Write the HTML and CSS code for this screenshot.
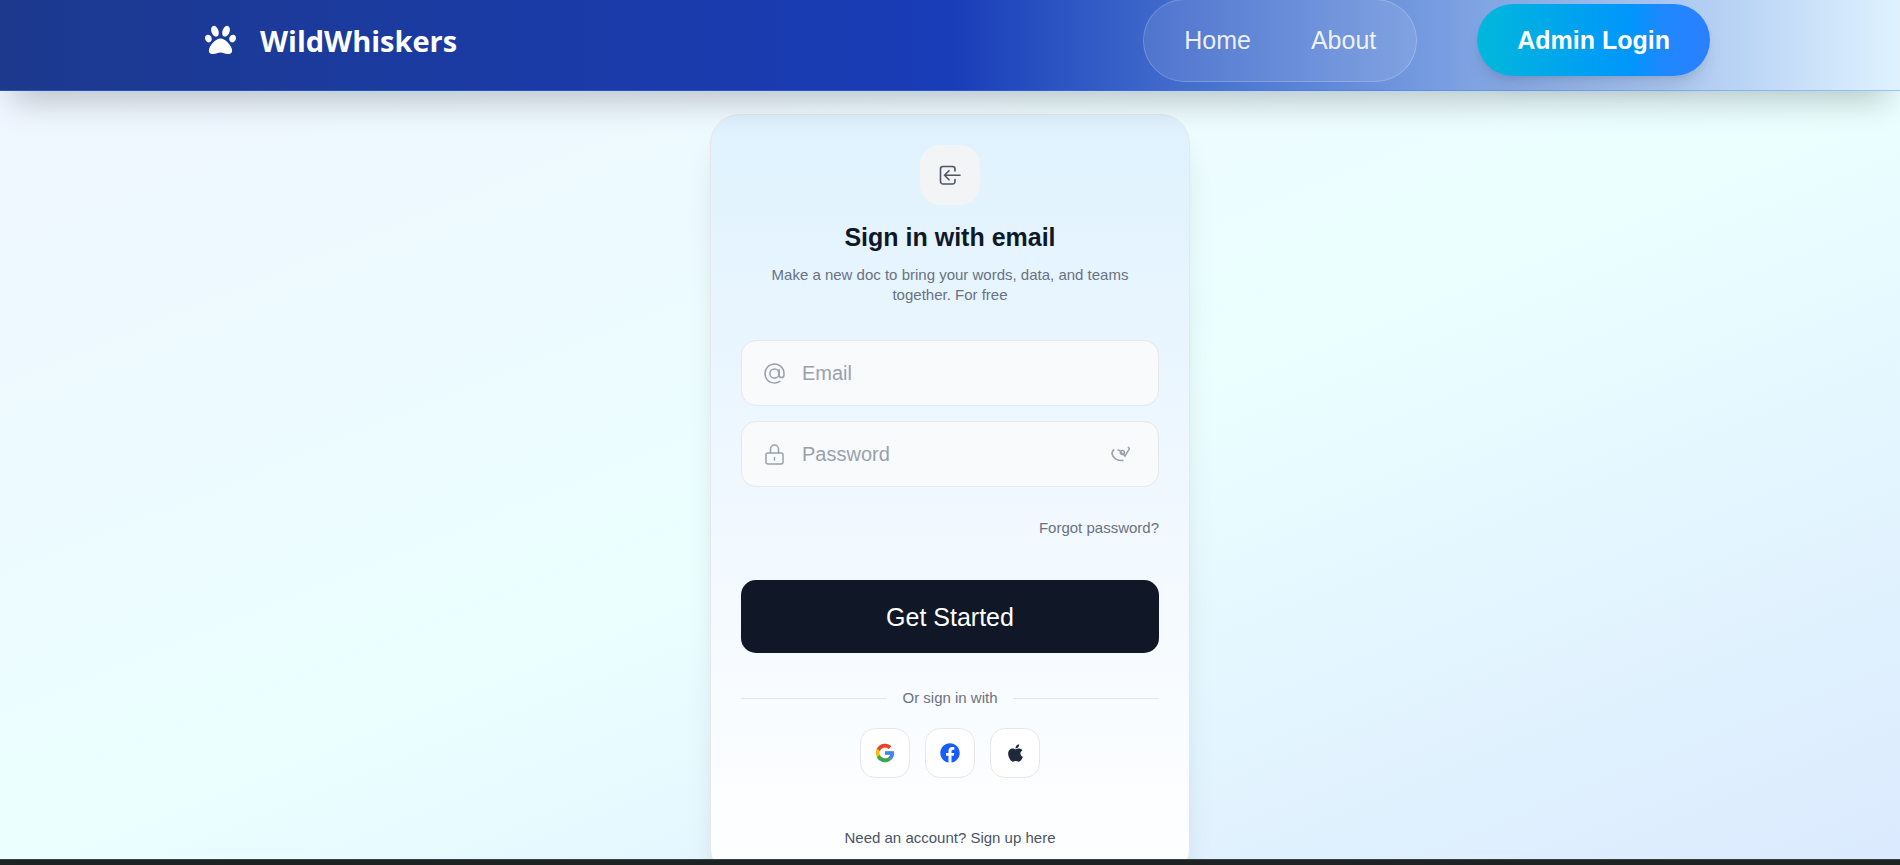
FILE: index.html
```html
<!DOCTYPE html>
<html lang="en">
<head>
<meta charset="utf-8">
<meta name="viewport" content="width=device-width, initial-scale=1">
<title>WildWhiskers</title>
<link rel="stylesheet" href="styles.css">
</head>
<body>
<header class="site-header">
  <div class="header-inner">
    <div class="brand">
      <span class="brand-mark">
        <svg width="31" height="31" viewBox="0 0 512 512" fill="currentColor" aria-hidden="true"><path d="M256 224c-79.41 0-192 122.76-192 200.25 0 34.9 26.81 55.75 71.74 55.75 48.84 0 81.09-25.08 120.26-25.08 39.51 0 71.85 25.08 120.26 25.08 44.93 0 71.74-20.85 71.74-55.75C448 346.76 335.41 224 256 224zm-147.28-12.61c-10.4-34.65-42.44-57.09-71.56-50.13-29.12 6.96-44.29 40.69-33.89 75.34 10.4 34.65 42.44 57.09 71.56 50.13 29.12-6.96 44.29-40.69 33.89-75.34zm84.72-20.78c30.94-8.14 42.94-53.9 26.8-102.21-16.14-48.31-54.31-80.9-85.25-72.76-30.94 8.14-42.94 53.9-26.8 102.21 16.14 48.31 54.32 80.9 85.25 72.76zm281.39-29.34c-29.12-6.96-61.15 15.48-71.56 50.13-10.4 34.65 4.77 68.38 33.89 75.34 29.12 6.96 61.15-15.48 71.56-50.13 10.4-34.65-4.77-68.38-33.89-75.34zm-156.27 29.34c30.94 8.14 69.11-24.45 85.25-72.76 16.14-48.31 4.14-94.07-26.8-102.21-30.94-8.14-69.11 24.45-85.25 72.76-16.14 48.31-4.14 94.07 26.8 102.21z"/></svg>
      </span>
      <span class="brand-name">WildWhiskers</span>
    </div>
    <div class="header-actions">
      <nav class="nav-pill">
        <a class="nav-link" href="#home">Home</a>
        <a class="nav-link" href="#about">About</a>
      </nav>
      <button class="admin-button" type="button">Admin Login</button>
    </div>
  </div>
</header>

<main class="page">
  <form class="card">
    <span class="card-badge">
      <svg width="25" height="25" viewBox="0 0 25 25" fill="none" stroke="currentColor" stroke-width="1.6" stroke-linecap="round" stroke-linejoin="round" aria-hidden="true"><path d="M17 8V6a2.500 2.500 0 0 0-2.500-2.500H5A2.500 2.500 0 0 0 2.500 6v12.500A2.500 2.500 0 0 0 5 21h9.500a2.500 2.500 0 0 0 2.500-2.500v-2M22 12.200H7M11 7.700l-4.500 4.500L11 16.700"/></svg>
    </span>
    <h1 class="card-title">Sign in with email</h1>
    <p class="card-text">Make a new doc to bring your words, data, and teams together. For free</p>

    <div class="fields">
      <div class="field">
        <svg class="field-icon" width="25" height="25" viewBox="0 0 25 25" fill="none" stroke="currentColor" stroke-width="1.5" stroke-linecap="round" aria-hidden="true"><circle cx="12.500" cy="12.500" r="4.600"/><path d="M17.100 8.500v5.200a2.450 2.900 0 0 0 4.900 0v-1.200a9.500 9.500 0 1 0-4.200 7.900"/></svg>
        <input class="field-input" type="email" placeholder="Email" aria-label="Email">
      </div>
      <div class="field">
        <svg class="field-icon" width="25" height="25" viewBox="0 0 25 25" fill="none" stroke="currentColor" stroke-width="1.500" stroke-linecap="round" aria-hidden="true"><rect x="4" y="11" width="17" height="11" rx="2"/><path d="M8.500 11V7a4 4 0 0 1 8 0v4M12.500 15.500v2.500"/></svg>
        <input class="field-input" type="password" placeholder="Password" aria-label="Password">
        <button class="reveal" type="button" aria-label="Show password">
          <svg width="20" height="20" viewBox="0 0 20 20" fill="none" stroke="currentColor" stroke-width="1.600" aria-hidden="true"><path d="M4.300 5.500C.5 8 1.800 12 5.500 14.800c2.500 1.700 5 1.900 8 1.700M7.500 6l3 .8M10 7.500l5 4.500 3.300-5.500c1.200-1 1.700-1.300-.3-3.500"/><circle cx="12.400" cy="8.500" r="2"/></svg>
        </button>
      </div>
    </div>

    <a class="forgot" href="#forgot">Forgot password?</a>
    <button class="submit" type="submit">Get Started</button>

    <div class="divider">Or sign in with</div>

    <div class="socials">
      <button class="social" type="button" aria-label="Google">
        <svg width="22" height="22" viewBox="0 0 48 48" aria-hidden="true"><path fill="#fbbc05" d="M43.611 20.083H42V20H24v8h11.303c-1.649 4.657-6.080 8-11.303 8-6.627 0-12-5.373-12-12s5.373-12 12-12c3.059 0 5.842 1.154 7.961 3.039l5.657-5.657C34.046 6.053 29.268 4 24 4 12.955 4 4 12.955 4 24s8.955 20 20 20 20-8.955 20-20c0-1.341-.138-2.650-.389-3.917z"/><path fill="#ea4335" d="m6.306 14.691 6.571 4.819C14.655 15.108 18.961 12 24 12c3.059 0 5.842 1.154 7.961 3.039l5.657-5.657C34.046 6.053 29.268 4 24 4 16.318 4 9.656 8.337 6.306 14.691z"/><path fill="#34a853" d="M24 44c5.166 0 9.860-1.977 13.409-5.192l-6.190-5.238A11.910 11.910 0 0 1 24 36c-5.202 0-9.619-3.317-11.283-7.946l-6.522 5.025C9.505 39.556 16.227 44 24 44z"/><path fill="#4285f4" d="M43.611 20.083H42V20H24v8h11.303a12.040 12.040 0 0 1-4.087 5.571l6.193 5.238C36.971 39.205 44 34 44 24c0-1.341-.138-2.650-.389-3.917z"/></svg>
      </button>
      <button class="social social-facebook" type="button" aria-label="Facebook">
        <svg width="20" height="20" viewBox="0 0 512 512" fill="currentColor" aria-hidden="true"><path d="M504 256C504 119 393 8 256 8S8 119 8 256c0 123.780 90.690 226.380 209.250 245V327.690h-63V256h63v-54.640c0-62.150 37-96.480 93.670-96.480 27.140 0 55.520 4.840 55.520 4.840v61h-31.280c-30.800 0-40.410 19.120-40.410 38.730V256h68.780l-11 71.690h-57.780V501C413.310 482.380 504 379.780 504 256z"/></svg>
      </button>
      <button class="social social-apple" type="button" aria-label="Apple">
        <svg width="15" height="20" viewBox="0 0 384 512" fill="currentColor" aria-hidden="true"><path d="M318.700 268.700c-.2-36.700 16.400-64.400 50-84.800-18.800-26.900-47.200-41.700-84.700-44.600-35.500-2.800-74.300 20.700-88.500 20.700-15 0-49.400-19.700-76.400-19.700C63.300 141.200 4 184.800 4 273.500q0 39.300 14.400 81.200c12.800 36.700 59 126.700 107.200 125.200 25.200-.6 43-17.900 75.800-17.900 31.800 0 48.300 17.900 76.400 17.900 48.600-.7 90.400-82.500 102.600-119.300-65.200-30.700-61.700-90-61.700-91.900zm-56.600-164.200c27.300-32.400 24.800-61.900 24-72.500-24.100 1.400-52 16.400-67.900 34.900-17.500 19.800-27.800 44.300-25.600 71.900 26.100 2 49.900-11.400 69.500-34.300z"/></svg>
      </button>
    </div>

    <a class="signup" href="#signup">Need an account? Sign up here</a>
  </form>
</main>
<footer class="bottom-bar"></footer>
</body>
</html>
```
FILE: styles.css
```css
* {
  box-sizing: border-box;
}

body {
  margin: 0;
  height: 100vh;
  overflow: hidden;
  display: flex;
  flex-direction: column;
  font-family: "Liberation Sans", Arial, sans-serif;
  font-size: 15px;
  line-height: 20px;
  color: #101828;
}

a {
  color: inherit;
  text-decoration: none;
}

button {
  font: inherit;
  color: inherit;
  cursor: pointer;
}

svg {
  display: block;
  flex: none;
}

.site-header {
  position: relative;
  z-index: 1;
  flex: none;
  padding-bottom: 10px;
  border-bottom: 1px solid rgba(43, 127, 255, 0.4);
  background: linear-gradient(to right in oklab, #1c398e, #193cb8 50%, #dff2fe) border-box;
  box-shadow: 0 20px 34px -12px rgba(0, 0, 0, 0.24);
}

.header-inner {
  display: flex;
  align-items: center;
  justify-content: space-between;
  height: 80px;
  max-width: 1600px;
  margin: 0 auto;
  padding: 0 40px;
}

.brand {
  display: flex;
  align-items: center;
  gap: 10px;
  color: #fff;
}

.brand-mark {
  display: flex;
  align-items: center;
  justify-content: center;
  width: 60px;
  height: 60px;
}

.brand-name {
  padding-top: 2px;
  font-family: "Open Sans", "Noto Sans", sans-serif;
  font-size: 29px;
  font-weight: 700;
  line-height: 40px;
}

.header-actions {
  display: flex;
  align-items: center;
  gap: 60px;
  font-size: 25px;
  line-height: 35px;
}

.nav-pill {
  display: flex;
  gap: 60px;
  padding: 23px 40px;
  border: 1px solid rgba(255, 255, 255, 0.2);
  border-radius: 42px;
  background: rgba(255, 255, 255, 0.1);
}

.nav-link {
  color: rgba(255, 255, 255, 0.9);
}

.admin-button {
  height: 72px;
  padding: 0 40px;
  border: 0;
  border-radius: 36px;
  background: linear-gradient(to right, #00b8db, #0096fb 66%, #1f88ff 80%, #2b7fff);
  box-shadow: 0 12px 18px -4px rgba(0, 0, 0, 0.1), 0 5px 8px -5px rgba(0, 0, 0, 0.1);
  color: #fff;
  font-weight: 700;
}

.page {
  flex: 1;
  min-height: 0;
  overflow: hidden;
  display: flex;
  align-items: flex-start;
  justify-content: center;
  padding-top: 23px;
  background: linear-gradient(to bottom right, #eff6ff, #ebffff 50%, #dbeafe);
}

.card {
  display: flex;
  flex-direction: column;
  align-items: center;
  width: 100%;
  max-width: 480px;
  padding: 30px;
  border: 1px solid #e5e7eb;
  border-radius: 30px;
  background: linear-gradient(to bottom, #dff2fe, #f0f8ff 50%, #fff);
  box-shadow: 0 25px 31px -6px rgba(0, 0, 0, 0.1), 0 10px 12px -8px rgba(0, 0, 0, 0.1);
}

.card-badge {
  display: flex;
  align-items: center;
  justify-content: center;
  width: 60px;
  height: 60px;
  border-radius: 20px;
  background: #f3f4f6;
  color: #4a5565;
}

.card-title {
  margin: 15px 0 10px;
  font-size: 25px;
  line-height: 35px;
}

.card-text {
  margin: 0 0 35px;
  padding: 0 25px;
  text-align: center;
  color: #6a7282;
}

.fields {
  display: flex;
  flex-direction: column;
  gap: 15px;
  width: 100%;
}

.field {
  display: flex;
  align-items: center;
  gap: 15px;
  height: 66px;
  padding: 0 20px;
  border: 1px solid #e5e7eb;
  border-radius: 15px;
  background: #f9fafb;
  color: #99a1af;
}

.field-input {
  flex: 1;
  min-width: 0;
  padding: 0;
  border: 0;
  outline: 0;
  background: transparent;
  color: #101828;
  font: inherit;
  font-size: 20px;
  line-height: 30px;
}

.field-input::placeholder {
  color: #99a1af;
  opacity: 1;
}

.reveal {
  padding: 0 8px;
  border: 0;
  background: none;
}

.forgot {
  align-self: flex-end;
  margin: 31px 0 42px;
  color: #6a7282;
}

.submit {
  width: 100%;
  height: 73px;
  border: 0;
  border-radius: 15px;
  background: #101828;
  color: #fff;
  font-size: 25px;
}

.divider {
  display: flex;
  align-items: center;
  gap: 15px;
  width: 100%;
  margin: 35px 0 20px;
  color: #6a7282;
}

.divider::before,
.divider::after {
  content: "";
  flex: 1;
  height: 1px;
  background: #e5e7eb;
}

.socials {
  display: flex;
  gap: 15px;
}

.social {
  display: flex;
  align-items: center;
  justify-content: center;
  width: 50px;
  height: 50px;
  padding: 0;
  border: 1px solid #e5e7eb;
  border-radius: 15px;
  background: #fff;
}

.social-facebook {
  color: #155dfc;
}

.social-apple {
  color: #1e2939;
}

.signup {
  margin-top: 50px;
  color: #4a5565;
}

.bottom-bar {
  position: relative;
  flex: none;
  height: 6px;
  border-top: 1px solid #3a4142;
  background: #1d2323;
}
```
